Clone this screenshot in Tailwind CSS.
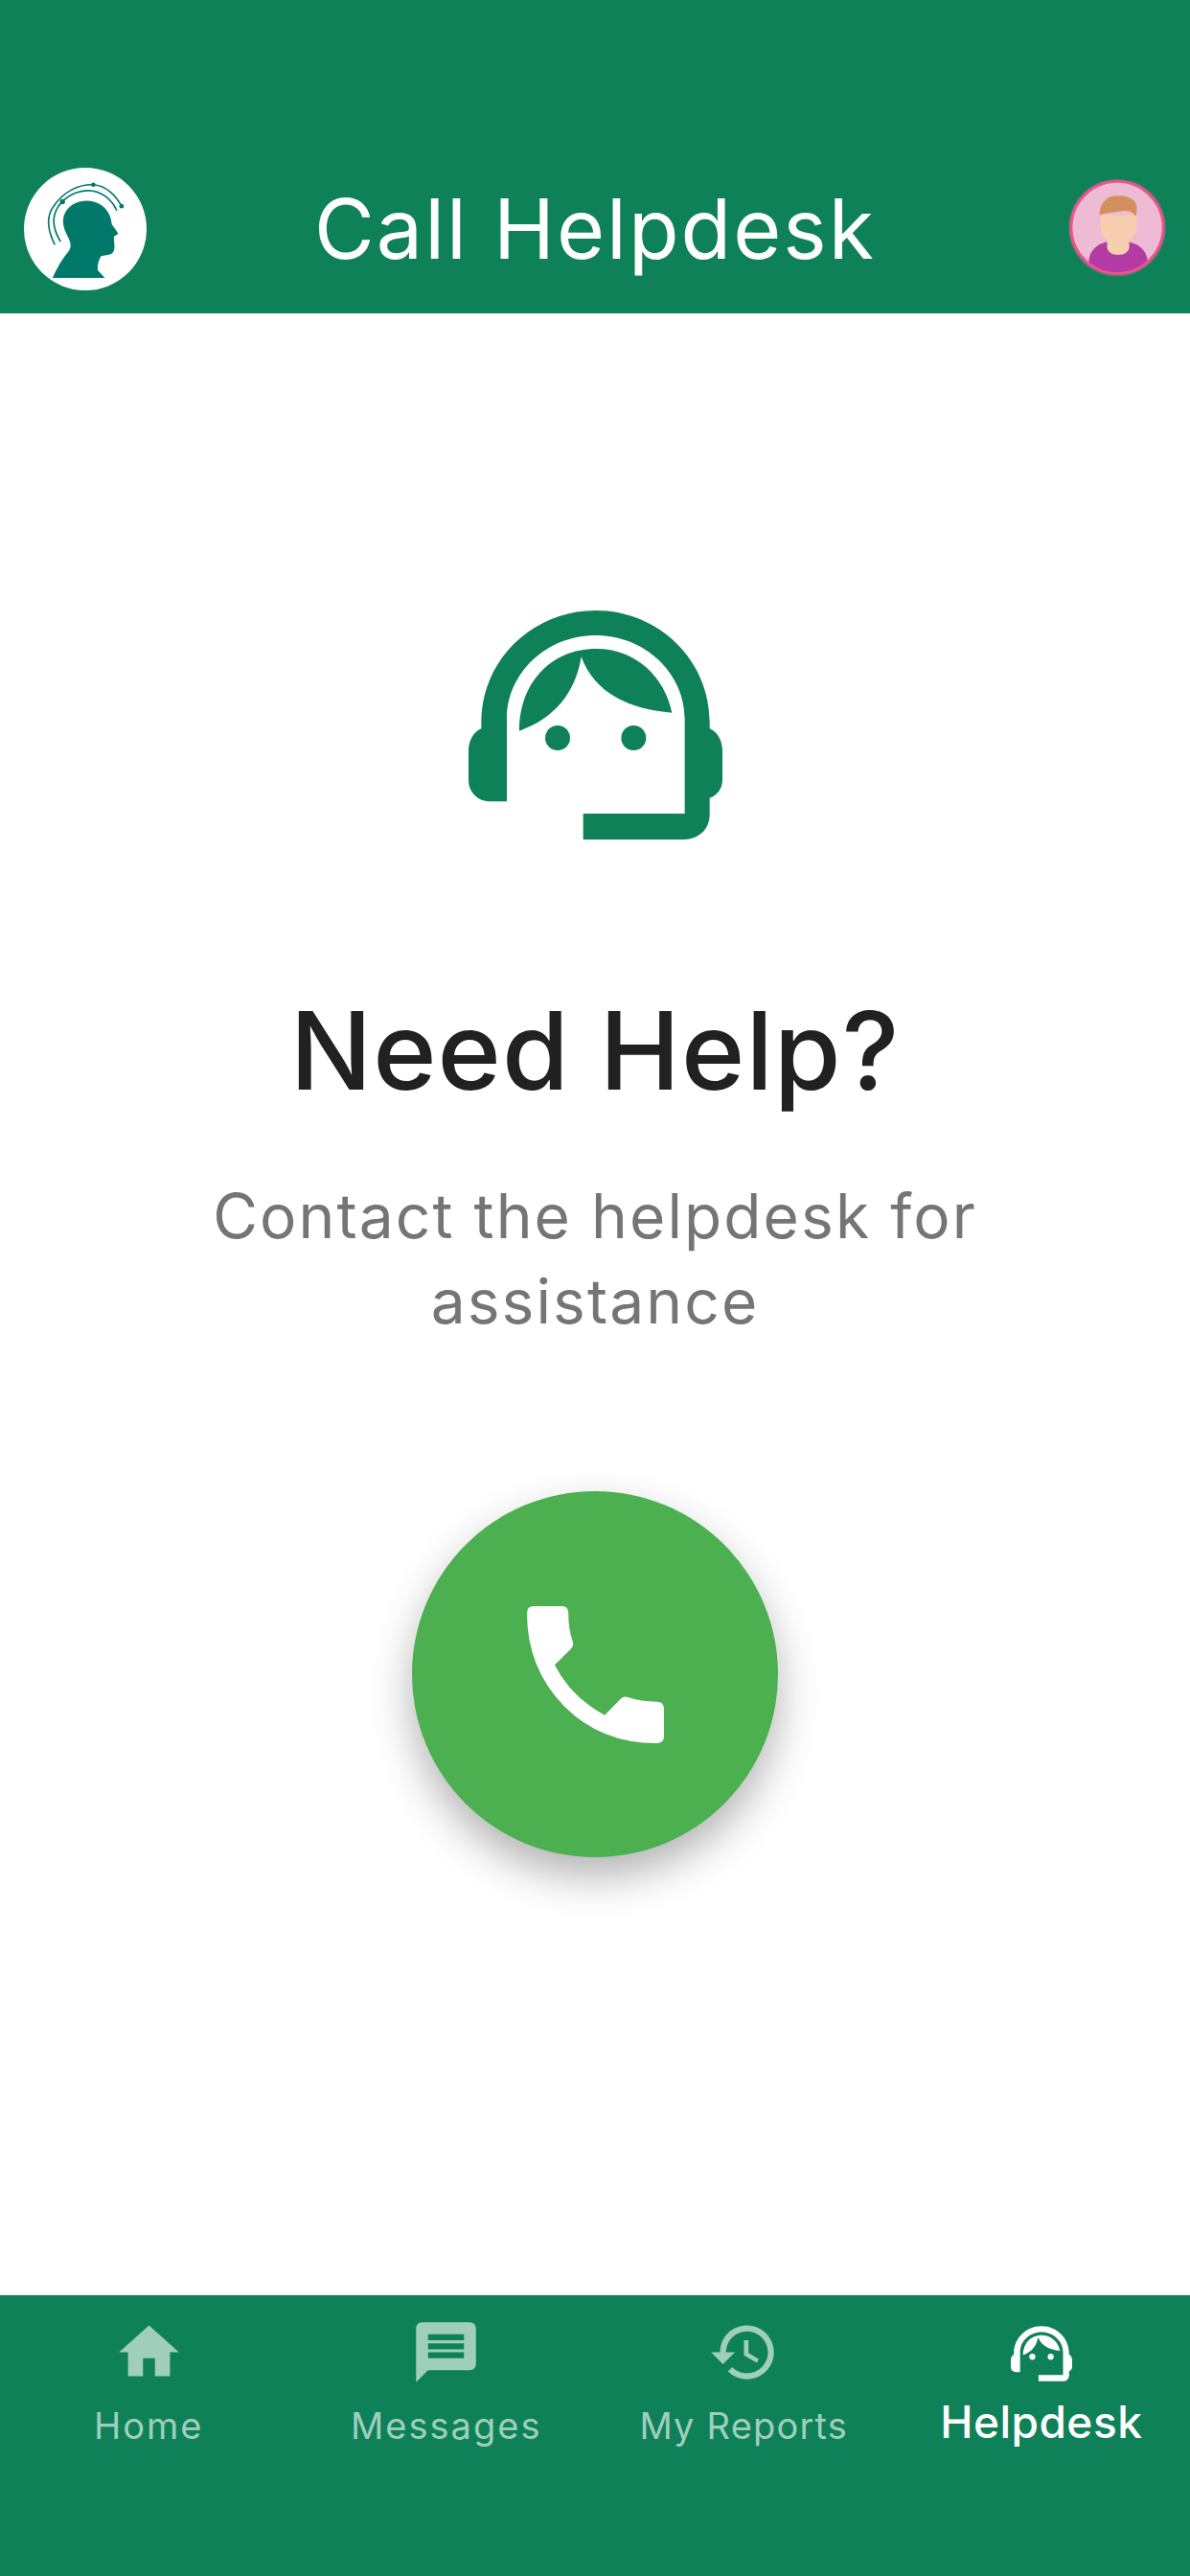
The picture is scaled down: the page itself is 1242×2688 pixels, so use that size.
<!DOCTYPE html>
<html>
<head>
    <title>Call Helpdesk</title>
    <script src="https://cdn.jsdelivr.net/npm/@tailwindcss/browser@4"></script>
</head>
<body class="bg-white">
    <div class="w-[1242px] h-[2688px] flex flex-col overflow-hidden font-['Inter','Liberation_Sans',sans-serif]">
        <!-- Header -->
        <header class="h-[327px] shrink-0 bg-[#0f8159] pt-[175px] pl-[25px] pr-[25px] flex items-start justify-between">
            <svg class="w-[128px] h-[128px]" viewBox="76 75 382 382">
                <circle cx="267" cy="266" r="191" fill="#fff"/>
                <path fill="#00796b" d="M165 418C178 388 196 358 216 334C224 322 222 308 214 292C202 270 194 252 200 226C210 194 240 178 272 178C306 178 336 198 346 232L350 252L370 280L356 290L358 320C358 334 354 344 340 346L316 350C308 364 304 380 306 394L328 418Z"/>
                <path fill="none" stroke="#00796b" stroke-width="5" d="M172 315C150 270 144 228 168 196C198 150 246 126 292 128C330 130 362 160 380 195"/>
                <path fill="none" stroke="#00796b" stroke-width="5" d="M190 305C166 266 162 226 184 194C210 160 246 146 276 146C316 146 348 172 365 208"/>
                <circle cx="196" cy="181" r="8" fill="#00796b"/>
                <circle cx="292" cy="128" r="7" fill="#00796b"/>
                <circle cx="380" cy="195" r="7" fill="#00796b"/>
            </svg>
            <h1 class="text-[86px] leading-[128px] font-normal text-white tracking-[2px] mr-[26px]">Call Helpdesk</h1>
            <svg class="w-[102px] h-[102px] mt-[12px]" viewBox="75 55 300 300">
                <defs><clipPath id="avatarClip"><circle cx="225" cy="203" r="140"/></clipPath></defs>
                <circle cx="225" cy="204" r="149" fill="#77707c"/>
                <circle cx="225" cy="203" r="140" fill="#edbbd4"/>
                <g clip-path="url(#avatarClip)">
                    <path fill="#b33ba3" d="M138 350V310C138 270 170 250 200 246H252C285 250 318 270 318 310V350Z"/>
                    <path fill="#f7cfb0" d="M194 225H262V262C262 278 246 287 228 287C210 287 194 278 194 262Z"/>
                    <path fill="#f7cfb0" d="M173 165H285V195C285 232 262 250 228 250C194 250 173 232 173 195Z"/>
                    <path fill="#d4905c" d="M171 166C170 140 182 122 200 110C225 102 262 106 278 122C288 134 286 150 283 170C270 150 250 150 230 154C205 158 185 158 171 166Z"/>
                </g>
                <circle cx="225" cy="203" r="141" fill="none" stroke="#f0528a" stroke-width="8"/>
            </svg>
        </header>

        <!-- Body -->
        <main class="flex-1 flex flex-col items-center pt-[310px]">
            <svg class="w-[265px] h-[239px]" viewBox="55 50 795 717">
                <path fill="#0f8159" d="M95 420C70 430 55 458 55 490V580C55 620 85 648 125 648H175V390C175 245 300 128 453 128C606 128 732 245 732 390V686H414V767H730C775 767 810 735 810 690V637C835 628 850 606 850 580V490C850 458 835 430 810 420V400C810 205 650 50 453 50C256 50 95 205 95 400Z"/>
                <path fill="#0f8159" d="M214 427C214 280 310 170 455 170C580 170 670 260 692 370C560 360 450 310 408 195C390 310 320 390 214 427Z"/>
                <circle cx="334" cy="449" r="39" fill="#0f8159"/>
                <circle cx="572" cy="449" r="39" fill="#0f8159"/>
            </svg>
            <h2 class="mt-[150px] text-[113px] leading-[140px] font-medium text-[#212121] tracking-[1px]">Need Help?</h2>
            <p class="mt-[58px] w-[900px] text-center text-[64px] leading-[89px] text-[#757575] tracking-[2.1px]">Contact the helpdesk for assistance</p>
            <button class="mt-[154px] w-[382px] h-[382px] rounded-full bg-[#4caf50] flex items-center justify-center shadow-[0_20px_44px_rgba(0,0,0,0.3)]">
                <svg class="w-[143px] h-[143px]" viewBox="448 436 430 430">
                    <path fill="#fff" d="M470 436H557Q578 436 578 458Q578 510 592 548Q596 560 586 570L535 620Q585 720 692 778L742 727Q752 717 765 722Q805 736 855 736Q878 736 878 758V844Q878 866 855 866Q680 866 565 750Q448 630 448 458Q448 436 470 436Z"/>
                </svg>
            </button>
        </main>

        <!-- Bottom nav -->
        <nav class="h-[293px] shrink-0 bg-[#0f8159] grid grid-cols-4 pt-[22px] text-[#9fcfbb]">
            <div class="flex flex-col items-center">
                <svg class="w-[75px] h-[75px]" viewBox="0 0 24 24" fill="currentColor"><path d="M10 20v-6h4v6h5v-8h3L12 3 2 12h3v8z"/></svg>
                <span class="mt-[17px] text-[38px] leading-[44px] tracking-[2px]">Home</span>
            </div>
            <div class="flex flex-col items-center">
                <svg class="w-[75px] h-[75px]" viewBox="0 0 24 24" fill="currentColor"><path d="M20 2H4c-1.1 0-1.99.9-1.99 2L2 22l4-4h14c1.1 0 2-.9 2-2V4c0-1.1-.9-2-2-2zm-2 12H6v-2h12v2zm0-3H6V9h12v2zm0-3H6V6h12v2z"/></svg>
                <span class="mt-[17px] text-[38px] leading-[44px] tracking-[2px]">Messages</span>
            </div>
            <div class="flex flex-col items-center">
                <svg class="w-[75px] h-[75px]" viewBox="0 0 24 24" fill="currentColor"><path d="M13 3c-4.97 0-9 4.03-9 9H1l3.89 3.89.07.14L9 12H6c0-3.87 3.13-7 7-7s7 3.13 7 7-3.13 7-7 7c-1.93 0-3.68-.79-4.94-2.06l-1.42 1.42C8.27 19.99 10.51 21 13 21c4.97 0 9-4.03 9-9s-4.03-9-9-9zm-1 5v5l4.28 2.54.72-1.21-3.5-2.08V8H12z"/></svg>
                <span class="mt-[17px] text-[38px] leading-[44px] tracking-[1.2px]">My Reports</span>
            </div>
            <div class="flex flex-col items-center text-white">
                <svg class="w-[64px] h-[58px] mt-[10px] mb-[7px]" viewBox="55 50 795 717">
                    <path fill="#fff" d="M95 420C70 430 55 458 55 490V580C55 620 85 648 125 648H175V390C175 245 300 128 453 128C606 128 732 245 732 390V686H414V767H730C775 767 810 735 810 690V637C835 628 850 606 850 580V490C850 458 835 430 810 420V400C810 205 650 50 453 50C256 50 95 205 95 400Z"/>
                    <path fill="#fff" d="M214 427C214 280 310 170 455 170C580 170 670 260 692 370C560 360 450 310 408 195C390 310 320 390 214 427Z"/>
                    <circle cx="334" cy="449" r="39" fill="#fff"/>
                    <circle cx="572" cy="449" r="39" fill="#fff"/>
                </svg>
                <span class="mt-[13px] text-[46px] leading-[44px] font-medium tracking-[0.5px]">Helpdesk</span>
            </div>
        </nav>
    </div>
</body>
</html>
